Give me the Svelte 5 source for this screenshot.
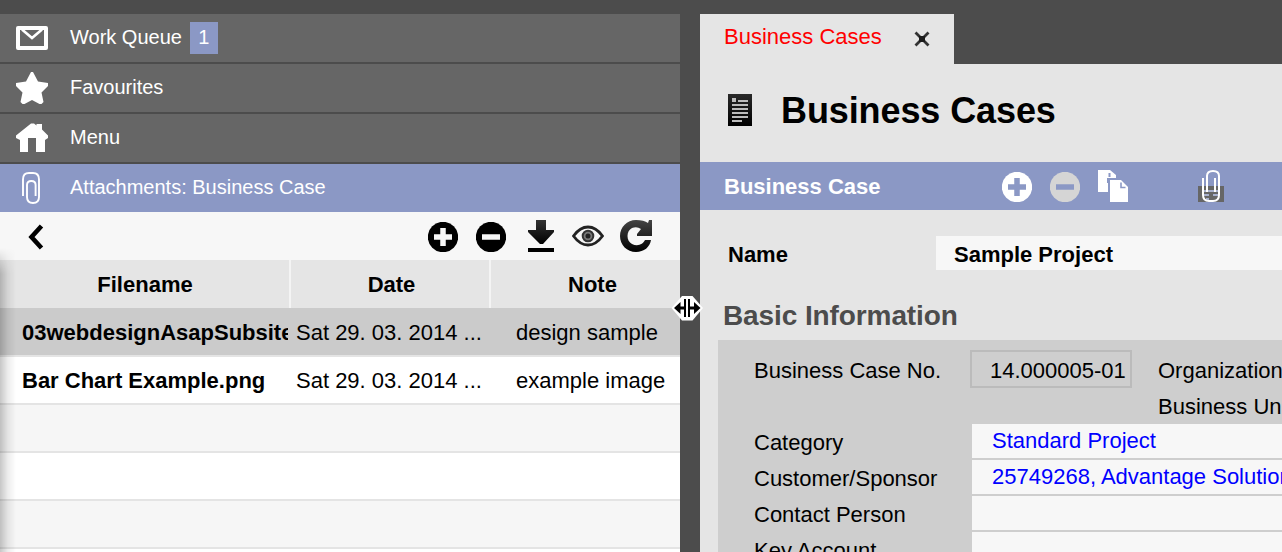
<script>
  const files = [
    { name: '03webdesignAsapSubsite.png', date: 'Sat 29. 03. 2014 ...', note: 'design sample', selected: true },
    { name: 'Bar Chart Example.png', date: 'Sat 29. 03. 2014 ...', note: 'example image' },
    { name: '', date: '', note: '' },
    { name: '', date: '', note: '' },
    { name: '', date: '', note: '' },
    { name: '', date: '', note: '' }
  ];
  const fields = [
    { label: 'Category', value: 'Standard Project' },
    { label: 'Customer/Sponsor', value: '25749268, Advantage Solutions' },
    { label: 'Contact Person', value: '' },
    { label: 'Key Account', value: '' }
  ];
</script>

<div class="app">
  <aside>
    <nav>
      <div class="item">
        <svg width="32" height="32" viewBox="0 0 32 32"><path d="M2 6h28v20H2z" fill="none" stroke="#fff" stroke-width="4" stroke-linejoin="round"/><path d="M6 7.500l10 8.500 10-8.500" fill="none" stroke="#fff" stroke-width="2.600"/></svg>
        <span>Work Queue</span><b class="badge">1</b>
      </div>
      <div class="item">
        <svg width="32" height="32" viewBox="0 0 32 32"><path d="M15 0h2l5 9.500 10 1.500v3l-6.500 6.500L27.500 30l-2 2h-2L16 28l-7.500 4h-2l-2-2 2-9.500L0 14v-3l10-1.500z" fill="#fff"/></svg>
        <span>Favourites</span>
      </div>
      <div class="item">
        <svg width="32" height="32" viewBox="0 0 32 32"><path d="M15 1.500h3l2.500 2V2H26v5.500l6 6V16l-3 2v12h-9V16h-8v14H4V18l-4-2v-2.500z" fill="#fff"/></svg>
        <span>Menu</span>
      </div>
      <div class="item active">
        <svg width="32" height="32" viewBox="0 0 32 32"><path d="M7 24V7.500Q7 1 13 1h4q6 0 6 6.500V25q0 6-6 6t-6-6V13Q11 9 15.300 9t4.300 4v11" fill="none" stroke="#fff" stroke-width="1.900"/></svg>
        <span>Attachments: Business Case</span>
      </div>
    </nav>
    <div class="tools">
      <svg class="back" width="18" height="26" viewBox="0 0 18 26"><path d="M15.500 2L5.500 13l10 11" fill="none" stroke="#000" stroke-width="4.600"/></svg>
      <svg class="round" width="30" height="30" viewBox="0 0 30 30"><circle cx="15" cy="15" r="15.200"/><path d="M15 6v18M6 15h18" stroke="#f7f7f7" stroke-width="5.500"/></svg>
      <svg class="round" width="30" height="30" viewBox="0 0 30 30"><circle cx="15" cy="15" r="15.200"/><path d="M6 15h18" stroke="#f7f7f7" stroke-width="5.500"/></svg>
      <svg class="down" width="26" height="32" viewBox="0 0 26 32"><defs><linearGradient id="down" x2="0" y2="1"><stop stop-color="#333"/><stop offset="1"/></linearGradient></defs><path d="M8 0h10v10h8v2L15 24h-3L0 12v-2h8z" fill="url(#down)"/><path d="M0 28h26v4H0z"/></svg>
      <svg class="eye" width="32" height="22" viewBox="0 0 32 22"><path d="M1.500 11Q8 2 16 2t14.500 9Q24 20 16 20T1.500 11z" fill="none" stroke="#222" stroke-width="2.800"/><circle cx="16" cy="11" r="5.300" fill="#777" stroke="#333" stroke-width="2"/><circle cx="16" cy="11" r="2.500" fill="#222"/></svg>
      <svg class="turn" width="32" height="32" viewBox="0 0 32 32"><defs><linearGradient id="turn" x2="0" y2="1"><stop stop-color="#444"/><stop offset="1"/></linearGradient></defs><path d="M32 0v16H17v-2l4-5q-4-3-9-1c-6 3-6 13 0 16 6 3 11 0 13-4h6C30 27 24 32 16 32 7 32 0 25 0 16S7 0 16 0q8 0 12 3l1-3z" fill="url(#turn)"/></svg>
    </div>
    <div class="grid">
      <div class="row head"><div>Filename</div><div>Date</div><div>Note</div></div>
      {#each files as file}
        <div class="row" class:selected={file.selected}>
          <div class="name">{file.name}</div><div class="date">{file.date}</div><div class="note">{file.note}</div>
        </div>
      {/each}
    </div>
    <div class="shade"></div>
  </aside>

  <div class="splitter">
    <svg class="cursor" width="32" height="26" viewBox="0 0 32 26"><path d="M11 1h10.500L32 13 21.500 25.500H11L.5 13z" fill="#fff"/><path d="M3 13l6.500-6v4.500H13V4h2v18h-2v-7.500H9.500V19zM29.500 13L23 7v4.500h-4V4h-2v18h2v-7.500h4V19z"/></svg>
  </div>

  <main>
    <div class="tabs">
      <div class="tab"><span>Business Cases</span>
        <svg width="16" height="16" viewBox="0 0 16 16"><path d="M1.500 1.500l13 13M14.500 1.500l-13 13" stroke="#333" stroke-width="2.800"/><path d="M5 5h6v6H5z" fill="#1c1c1c"/></svg>
      </div>
    </div>
    <div class="title">
      <svg width="24" height="32" viewBox="0 0 24 32"><defs><linearGradient id="doc" x2="0" y2="1"><stop stop-color="#292929"/><stop offset="1"/></linearGradient></defs><path d="M0 0h24v32H0z" fill="url(#doc)"/><path d="M4 4h4v4H4zM10 6h10v2H10zM4 10h16v2H4zM4 14h16v2H4zM4 18h16v2H4zM4 22h16v2H4zM4 26h10v2H4z" fill="#bcbcbc"/></svg>
      <h1>Business Cases</h1>
    </div>
    <div class="section">
      <b>Business Case</b>
      <svg class="round" width="30" height="30" viewBox="0 0 30 30"><circle cx="15" cy="15" r="15.200" fill="#fff"/><path d="M15 6v18M6 15h18" stroke="#8b98c5" stroke-width="5.500"/></svg>
      <svg class="round" width="30" height="30" viewBox="0 0 30 30"><circle cx="15" cy="15" r="15.200" fill="#d5d5d5"/><path d="M6 15h18" stroke="#8b98c5" stroke-width="5.500"/></svg>
      <svg class="copy" width="30" height="32" viewBox="0 0 30 32"><path d="M0 0h12l6 5v3h-8v14H0z" fill="#fff"/><path d="M11.500 3v4M10 8v5" stroke="#8b98c5" stroke-width="2"/><path d="M12 10h11l7 7v15H12z" fill="#fff"/><path d="M23 12.500v5h4.500" fill="none" stroke="#8b98c5" stroke-width="1.600"/></svg>
      <svg class="clip" width="26" height="32" viewBox="0 0 26 32"><path d="M0 16h26v16H0z" fill="#666"/><path d="M6 21h14M6 25h5M15 25h5M8 29h3" stroke="#a9b2cf" stroke-width="2"/><path d="M5 8v17q0 6 6 6h4q6 0 6-6V6q0-5-6-5T9 6v16M17 8v14" fill="none" stroke="#fff" stroke-width="2"/></svg>
    </div>
    <div class="namerow"><b>Name</b><div>Sample Project</div></div>
    <h2>Basic Information</h2>
    <div class="panel">
      <div class="line"><span class="label">Business Case No.</span><div class="number">14.000005-01</div><span class="side">Organization</span></div>
      <div class="line"><span class="label"></span><div class="gap"></div><span class="side">Business Unit</span></div>
      {#each fields as field}
        <div class="line"><span class="label">{field.label}</span><div class="value">{field.value}</div></div>
      {/each}
    </div>
  </main>
</div>

<style>
  :global(body) { overflow: hidden; background: #4c4c4c; }
  .app { display: flex; width: 1282px; height: 552px; box-sizing: border-box; padding-top: 14px; overflow: hidden; background: #4c4c4c; font: 22px/48px "Liberation Sans", Arial, sans-serif; color: #000; white-space: nowrap; }
  svg { display: block; flex: none; }
  aside { position: relative; width: 680px; flex: none; overflow: hidden; }
  nav { display: grid; gap: 2px; }
  .item { display: flex; height: 48px; box-sizing: border-box; padding: 8px 16px; background: #666; color: #fff; font-size: 20px; }
  .item span { margin-left: 22px; line-height: 30px; }
  .item.active { background: #8b98c5; }
  .badge { width: 28px; height: 32px; margin-left: 8px; background: #8b98c5; font-weight: normal; line-height: 30px; text-align: center; }
  .tools { display: flex; align-items: flex-start; height: 48px; box-sizing: border-box; padding: 8px 28px 0 26px; background: #f7f7f7; }
  .back { margin: 4px auto 0 0; }
  .tools .round { margin: 2px 18px 0 0; }
  .down { margin: 0 18px 0 4px; }
  .eye { margin: 5px 16px 0 0; }
  .row { display: grid; grid-template-columns: 290px 200px 190px; height: 48px; box-sizing: border-box; border-bottom: 2px solid #e4e4e4; background: #f6f6f6; }
  .row:nth-child(odd) { background: #fff; }
  .row.selected { height: 49px; line-height: 50px; background: #cbcbcb; }
  .row div { overflow: hidden; }
  .row .name { margin: 0 2px 0 22px; font-weight: bold; }
  .date { padding-left: 6px; }
  .note { padding-left: 26px; }
  .row.head { border: 0; background: #e5e5e5; font-weight: bold; line-height: 50px; text-align: center; }
  .head div + div { border-left: 2px solid #f4f4f4; margin-left: -1px; }
  .head div:nth-child(2) { padding-left: 2px; }
  .head div:nth-child(3) { padding-left: 14px; }
  .shade { position: absolute; left: 0; top: 234px; bottom: 0; width: 16px; background: linear-gradient(to right, rgba(0,0,0,.22), rgba(0,0,0,.07) 50%, transparent); -webkit-mask-image: linear-gradient(transparent, #000 26px); mask-image: linear-gradient(transparent, #000 26px); }
  .splitter { position: relative; width: 20px; flex: none; z-index: 1; }
  .cursor { position: absolute; left: -9px; top: 281px; }
  main { flex: none; width: 582px; overflow: hidden; background: #e5e5e5; }
  .tabs { height: 50px; background: #4c4c4c; }
  .tab { display: flex; width: 254px; height: 50px; box-sizing: border-box; padding-left: 24px; background: #e5e5e5; color: #f00; line-height: 45px; }
  .tab span { width: 190px; }
  .tab svg { margin-top: 17px; }
  .title { display: flex; height: 98px; padding-left: 28px; }
  .title svg { margin-top: 30px; }
  h1 { margin: 0 0 0 29px; font-size: 36px; line-height: 93px; letter-spacing: -.1px; }
  .section { display: flex; height: 48px; padding-left: 24px; background: #8b98c5; color: #fff; line-height: 50px; }
  .section b { width: 278px; }
  .section .round { margin: 10px 18px 0 0; }
  .copy { margin-top: 8px; }
  .clip { margin: 8px 0 0 70px; }
  .namerow { display: flex; height: 34px; margin-top: 26px; padding-left: 28px; font-weight: bold; line-height: 37px; }
  .namerow b { width: 208px; }
  .namerow div { flex: 1; padding-left: 18px; background: #f7f7f7; }
  h2 { height: 40px; margin: 30px 0 0 23px; font-size: 28px; line-height: 32px; letter-spacing: -.1px; color: #4c4c4c; }
  .panel { margin-left: 18px; height: 300px; padding: 12px 0 0 36px; background: #cecece; }
  .line { display: flex; height: 36px; line-height: 37px; }
  .label { width: 218px; flex: none; }
  .number { width: 162px; height: 38px; flex: none; margin: -2px 0 0 -2px; box-sizing: border-box; border: 2px solid #bbb; padding-left: 18px; }
  .gap { width: 160px; flex: none; }
  .side { margin-left: 26px; flex: none; }
  .value { width: 310px; flex: none; height: 34px; box-sizing: border-box; padding-left: 20px; line-height: 33px; background: #f7f7f7; color: #00f; }
</style>
